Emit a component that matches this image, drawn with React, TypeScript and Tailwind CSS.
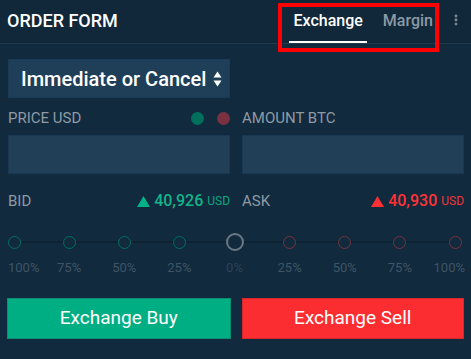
import { EllipsisVertical } from 'lucide-react'

const steps = ['100%', '75%', '50%', '25%', '0%', '25%', '50%', '75%', '100%']

function SortArrows() {
  return (
    <svg width="9" height="16" viewBox="0 0 9 16" className="shrink-0">
      <path d="M4.5 0.5 L8.5 6.5 H0.5 Z" fill="#ffffff" />
      <path d="M4.5 15.5 L8.5 9.5 H0.5 Z" fill="#ffffff" />
    </svg>
  )
}

function Triangle({ color }: { color: string }) {
  return (
    <svg width="13" height="11" viewBox="0 0 13 11" className="shrink-0">
      <path d="M6.5 0 L13 11 H0 Z" fill={color} />
    </svg>
  )
}

function Quote({ label, value, up }: { label: string; value: string; up: 'buy' | 'sell' }) {
  const buy = up === 'buy'
  return (
    <div className="flex h-[20px] items-center justify-between">
      <span className="text-[15px] text-[#8e9ba6]">{label}</span>
      <span className="flex items-center gap-[4px]">
        <Triangle color={buy ? '#00b386' : '#ff3034'} />
        <span className={buy ? 'text-[16px] font-medium text-[#14b38b]' : 'text-[16px] font-medium text-[#ff3337]'}>
          {value}
        </span>
        <span className={buy ? 'text-[12px] text-[#0ea781]' : 'text-[12px] text-[#f2353a]'}>USD</span>
      </span>
    </div>
  )
}

export default function App() {
  return (
    <div className="relative h-[359px] w-[471px] overflow-hidden bg-[#112a3d] font-['Roboto','Liberation_Sans',sans-serif] text-white">
      {/* Header */}
      <div className="flex h-[44px] items-stretch justify-between border-b border-[#1f394b] bg-[#10283a] pl-[7px] pr-[8px]">
        <div className="flex items-center pb-[2px] text-[18px] font-medium text-white">ORDER FORM</div>
        <div className="flex items-stretch">
          <div className="flex items-center border-b-2 border-white px-[4px] text-[16px] font-medium text-white">
            Exchange
          </div>
          <div className="ml-[12px] flex items-center px-[4px] pb-[2px] text-[16px] font-medium text-[#8b99a4]">
            Margin
          </div>
          <div className="ml-[12px] flex items-center pb-[4px]">
            <EllipsisVertical size={14} strokeWidth={3} className="text-[#7f8d98]" />
          </div>
        </div>
      </div>

      {/* Form */}
      <div className="pl-[8px] pr-[7px] pt-[15px]">
        <div className="grid grid-cols-2 gap-x-[12px]">
          <div className="flex h-[39px] items-center justify-between border border-[#193b57] bg-[#1f3f58] pl-[12px] pr-[7px]">
            <span className="text-[20px] font-medium text-white">Immediate or Cancel</span>
            <SortArrows />
          </div>
          <div />

          <div className="mt-[10px] flex h-[20px] items-center justify-between">
            <span className="text-[15px] text-[#8e9ba6]">PRICE USD</span>
            <span className="flex items-center gap-[13px]">
              <span className="h-[13px] w-[13px] rounded-full bg-[#00705c]" />
              <span className="h-[13px] w-[13px] rounded-full bg-[#7b3240]" />
            </span>
          </div>
          <div className="mt-[10px] flex h-[20px] items-center">
            <span className="text-[15px] text-[#8e9ba6]">AMOUNT BTC</span>
          </div>

          <div className="mt-[7px] h-[39px] border border-[#173956] bg-[#223f58]" />
          <div className="mt-[7px] h-[39px] border border-[#173956] bg-[#223f58]" />

          <div className="mt-[17px]">
            <Quote label="BID" value="40,926" up="buy" />
          </div>
          <div className="mt-[17px]">
            <Quote label="ASK" value="40,930" up="sell" />
          </div>
        </div>

        {/* Slider */}
        <div className="relative mt-[25px] flex justify-between pr-[3px]">
          <div className="absolute left-[6px] right-[9px] top-[5px] h-[2px] bg-[#0d2333]" />
          {steps.map((s, i) => {
            const center = i === 4
            const buy = i < 4
            const edge = i === 0 ? 'self-start' : i === 8 ? 'self-end -mr-[4px]' : ''
            return (
              <div key={i} className="relative flex w-[12px] flex-col items-center">
                {center ? (
                  <span className="-mt-[3px] h-[18px] w-[18px] shrink-0 rounded-full border-2 border-[#6a7985] bg-[#112a3d]" />
                ) : (
                  <span
                    className={
                      buy
                        ? 'h-[13px] w-[13px] shrink-0 rounded-full border-[1.5px] border-[#00705d] bg-[#112a3d]'
                        : 'h-[13px] w-[13px] shrink-0 rounded-full border-[1.5px] border-[#77343f] bg-[#112a3d]'
                    }
                  />
                )}
                <span
                  className={
                    center
                      ? 'mt-[7px] whitespace-nowrap text-[13px] text-[#2b4457]'
                      : `mt-[9px] whitespace-nowrap text-[13px] text-[#3f5566] ${edge}`
                  }
                >
                  {s}
                </span>
              </div>
            )
          })}
        </div>

        {/* Actions */}
        <div className="mt-[20px] grid grid-cols-2 gap-x-[11px]">
          <button className="-ml-[1px] flex h-[41px] items-center justify-center border border-[#0b8e72] bg-[#00ae84] text-[19px] text-white">
            Exchange Buy
          </button>
          <button className="flex h-[41px] items-center justify-center border border-[#d6272c] bg-[#fc2d30] text-[19px] text-white">
            Exchange Sell
          </button>
        </div>
      </div>

      {/* Annotation box */}
      <div className="pointer-events-none absolute left-[278px] top-[3px] h-[49px] w-[161px] border-4 border-[#ff0000]" />
    </div>
  )
}
